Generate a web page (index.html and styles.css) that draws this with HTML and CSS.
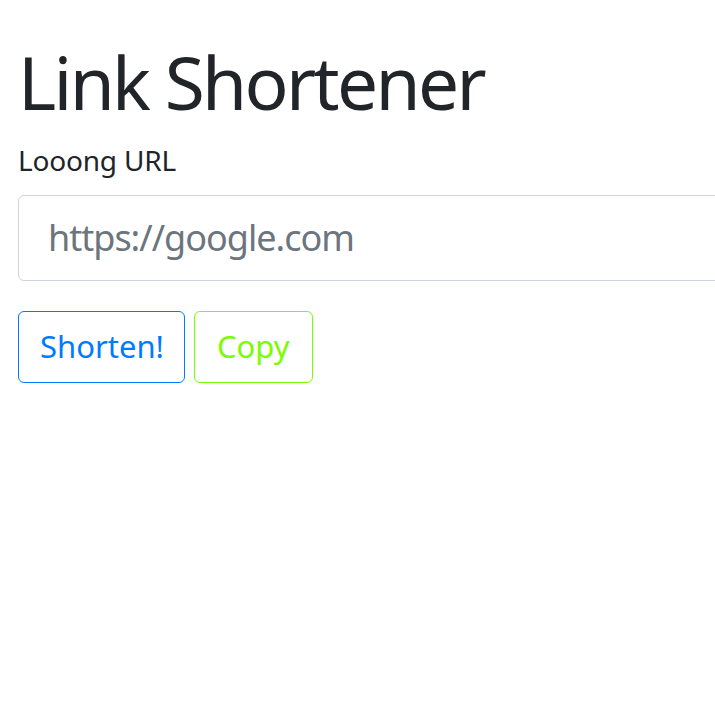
FILE: index.html
```html
<!DOCTYPE html>
<html lang="en">
<head>
<meta charset="utf-8">
<title>Link Shortener</title>
<link rel="stylesheet" href="styles.css">
</head>
<body>
<div class="container">
  <h1 class="title">Link Shortener</h1>
  <form class="form" onsubmit="return false">
    <label class="label" for="url">Looong URL</label>
    <input class="input" id="url" type="text" placeholder="https://google.com">
    <div class="actions">
      <button class="btn btn-blue" type="button">Shorten!</button>
      <button class="btn btn-green" type="button">Copy</button>
    </div>
  </form>
</div>
</body>
</html>
```

FILE: styles.css
```css
html, body {
  margin: 0;
  padding: 0;
  overflow: hidden;
  background: #fff;
}
body {
  font-family: "Noto Sans", "Open Sans", sans-serif;
  color: #212529;
}
.container {
  padding: 38px 0 0 18px;
}
.title {
  margin: 0;
  font-size: 73px;
  font-weight: 400;
  line-height: 1.2;
  letter-spacing: -2.7px;
}
.form {
  display: flex;
  flex-direction: column;
  align-items: flex-start;
}
.label {
  display: block;
  margin-top: 13px;
  font-size: 28px;
  line-height: 1.5;
  letter-spacing: -0.2px;
}
.input {
  box-sizing: border-box;
  margin-top: 14px;
  width: 760px;
  height: 86px;
  padding: 0 29px;
  border: 1px solid #ced4da;
  border-radius: 6px;
  font-family: inherit;
  font-size: 36px;
  letter-spacing: -1px;
  color: #495057;
  outline: none;
}
.input::placeholder {
  color: #6c757d;
  opacity: 1;
}
.actions {
  margin-top: 30px;
  display: flex;
  gap: 9px;
}
.btn {
  box-sizing: border-box;
  height: 72px;
  padding: 0 21px;
  background: #fff;
  border: 1px solid;
  border-radius: 6px;
  font-family: inherit;
  font-size: 31px;
  line-height: 1.5;
}
.btn-blue {
  color: #007bff;
  border-color: #007bff;
  padding: 0 20px 0 21px;
}
.btn-green {
  color: #7cfc00;
  border-color: #7cfc00;
  padding: 0 22px;
}
```
